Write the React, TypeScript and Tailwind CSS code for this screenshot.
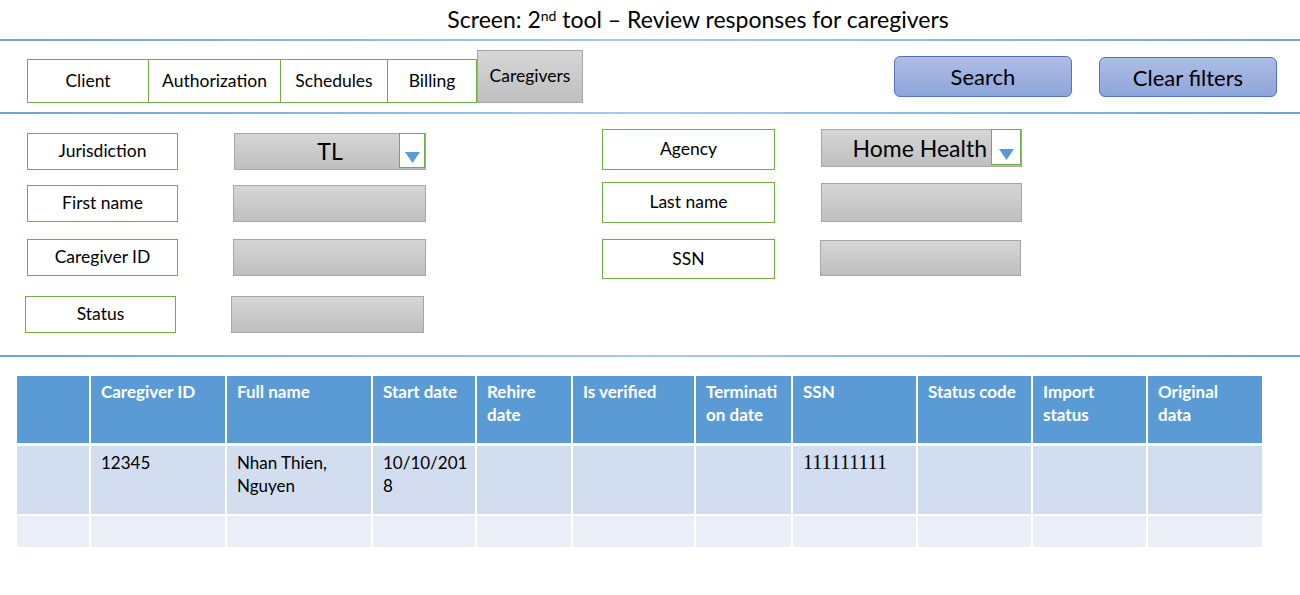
import React from 'react';

const font = { fontFamily: 'Lato, "Open Sans", sans-serif' };

const tabs = [
  { name: 'Client', w: 'w-[122px]' },
  { name: 'Authorization', w: 'w-[132px]' },
  { name: 'Schedules', w: 'w-[107px]' },
  { name: 'Billing', w: 'w-[89px]' },
];

// header labels are broken the same way the mockup wraps them
const columns = [
  { label: [''], w: 'w-[72px]' },
  { label: ['Caregiver ID'], w: 'w-[134px]' },
  { label: ['Full name'], w: 'w-[144px]' },
  { label: ['Start date'], w: 'w-[102px]' },
  { label: ['Rehire', 'date'], w: 'w-[94px]' },
  { label: ['Is verified'], w: 'w-[121px]' },
  { label: ['Terminati', 'on date'], w: 'w-[95px]' },
  { label: ['SSN'], w: 'w-[123px]' },
  { label: ['Status code'], w: 'w-[113px]' },
  { label: ['Import', 'status'], w: 'w-[113px]' },
  { label: ['Original', 'data'], w: 'w-[114px]' },
];

const rowData: string[][] = [[], ['12345'], ['Nhan Thien,', 'Nguyen'], ['10/10/201', '8'], [], [], [], ['111111111'], [], [], []];

function Divider() {
  return <div className="h-[2px] w-full bg-gradient-to-r from-[#6fa3d9] via-[#a8c9ec] to-[#6fa3d9]" />;
}

function Lines({ lines }: { lines: string[] }) {
  return (
    <>
      {lines.map((l, i) => (
        <div key={i} className="whitespace-nowrap">
          {l}
        </div>
      ))}
    </>
  );
}

function Label({ text, className = '' }: { text: string; className?: string }) {
  return (
    <div
      className={`flex items-center justify-center border-[1.5px] border-[#70ad47] bg-white text-[17.5px] text-black ${className}`}
    >
      {text}
    </div>
  );
}

function Field({ className = '' }: { className?: string }) {
  return (
    <div className={`border-[1.5px] border-[#a6a6a6] bg-gradient-to-b from-[#d6d6d6] to-[#bfbfbf] ${className}`} />
  );
}

function Arrow() {
  return (
    <svg width="15" height="11" viewBox="0 0 15 11">
      <polygon points="0,0 15,0 7.5,11" fill="#5b9bd5" />
    </svg>
  );
}

function Select({ value, className = '', textClass = '', boxClass = '' }: { value: string; className?: string; textClass?: string; boxClass?: string }) {
  return (
    <div className={`flex items-start border-[1.5px] border-[#a6a6a6] bg-gradient-to-b from-[#d6d6d6] to-[#bfbfbf] ${className}`}>
      <div className={`flex h-full flex-1 items-center text-[23px] text-black ${textClass}`}>{value}</div>
      <div className={`flex items-end justify-center border-[1.5px] border-[#70ad47] bg-white pb-[4px] ${boxClass}`}>
        <Arrow />
      </div>
    </div>
  );
}

export default function App() {
  return (
    <div className="h-[595px] w-[1300px] overflow-hidden bg-white" style={font}>
      {/* Title */}
      <div className="flex h-[39px] items-center justify-center pl-[96px] text-[23px] text-black">
        <span>
          Screen: 2<sup className="text-[14px]">nd</sup> tool – Review responses for caregivers
        </span>
      </div>
      <Divider />

      {/* Tabs + actions */}
      <div className="flex h-[71px] items-start justify-between pl-[27px] pr-[23px]">
        <div className="mt-[9px] flex items-end">
          {tabs.map((t, i) => (
            <div
              key={t.name}
              className={`flex h-[44px] items-center justify-center border-y-[1.5px] border-r-[1.5px] border-[#70ad47] text-[17.5px] text-black ${t.w} ${i === 0 ? 'border-l-[1.5px]' : ''}`}
            >
              {t.name}
            </div>
          ))}
          <div className="flex h-[53px] w-[106px] items-center justify-center border-[1.5px] border-[#a6a6a6] bg-gradient-to-b from-[#d6d6d6] to-[#bfbfbf] text-[17.5px] text-black">
            Caregivers
          </div>
        </div>
        <div className="mt-[15px] flex gap-[27px]">
          <button className="flex h-[41px] w-[178px] items-center justify-center rounded-[6px] border border-[#4f74c4] bg-gradient-to-b from-[#aebde5] to-[#8ea5da] text-[22px] text-black">
            Search
          </button>
          <button className="mt-[1px] flex h-[40px] w-[178px] items-center justify-center rounded-[6px] border border-[#4f74c4] bg-gradient-to-b from-[#aebde5] to-[#8ea5da] text-[22px] text-black">
            Clear filters
          </button>
        </div>
      </div>
      <Divider />

      {/* Filters */}
      <div className="flex h-[241px]">
        <div className="ml-[27px] mt-[19px] flex flex-col">
          <div className="flex h-[37px] items-center">
            <Label text="Jurisdiction" className="h-[37px] w-[151px]" />
            <Select value="TL" className="ml-[56px] h-[37px] w-[192px]" textClass="justify-center pl-[26px]" boxClass="h-full w-[26px] -mt-px" />
          </div>
          <div className="mt-[15px] flex h-[37px] items-center">
            <Label text="First name" className="h-[37px] w-[151px]" />
            <Field className="ml-[55px] h-[37px] w-[193px]" />
          </div>
          <div className="mt-[17px] flex h-[37px] items-center">
            <Label text="Caregiver ID" className="h-[37px] w-[151px]" />
            <Field className="ml-[55px] h-[37px] w-[193px]" />
          </div>
          <div className="-ml-[2px] mt-[20px] flex h-[37px] items-center">
            <Label text="Status" className="h-[37px] w-[151px]" />
            <Field className="ml-[55px] h-[37px] w-[193px]" />
          </div>
        </div>

        <div className="ml-[176px] mt-[15px] flex flex-col">
          <div className="flex items-start">
            <Label text="Agency" className="h-[41px] w-[173px]" />
            <Select value="Home Health" className="ml-[46px] h-[38px] w-[201px]" textClass="justify-end pr-[4px]" boxClass="h-[36px] w-[30px] -mt-px" />
          </div>
          <div className="mt-[12px] flex items-start">
            <Label text="Last name" className="h-[41px] w-[173px]" />
            <Field className="ml-[46px] mt-px h-[39px] w-[201px]" />
          </div>
          <div className="mt-[16px] flex items-start">
            <Label text="SSN" className="h-[40px] w-[173px]" />
            <Field className="ml-[45px] mt-px h-[36px] w-[201px]" />
          </div>
        </div>
      </div>
      <Divider />

      {/* Results table */}
      <div className="ml-[17px] mt-[19px] flex w-[1245px] flex-col">
        <div className="flex gap-[2px]">
          {columns.map((c, i) => (
            <div
              key={i}
              className={`h-[67px] bg-[#5b9bd5] pl-[10px] pt-[4px] text-[17px] font-bold leading-[23px] text-white ${c.w}`}
            >
              <Lines lines={c.label} />
            </div>
          ))}
        </div>
        <div className="mt-[3px] flex gap-[2px]">
          {columns.map((c, i) => (
            <div
              key={i}
              className={`h-[68px] bg-[#d2deef] pl-[10px] pt-[5px] text-[17px] leading-[23px] text-black ${c.w}`}
              style={i === 7 ? { fontFamily: '"Liberation Serif", serif', fontSize: '20px' } : undefined}
            >
              <Lines lines={rowData[i]} />
            </div>
          ))}
        </div>
        <div className="mt-[2px] flex gap-[2px]">
          {columns.map((c, i) => (
            <div key={i} className={`h-[31px] bg-[#eaeff7] ${c.w}`} />
          ))}
        </div>
      </div>
    </div>
  );
}
